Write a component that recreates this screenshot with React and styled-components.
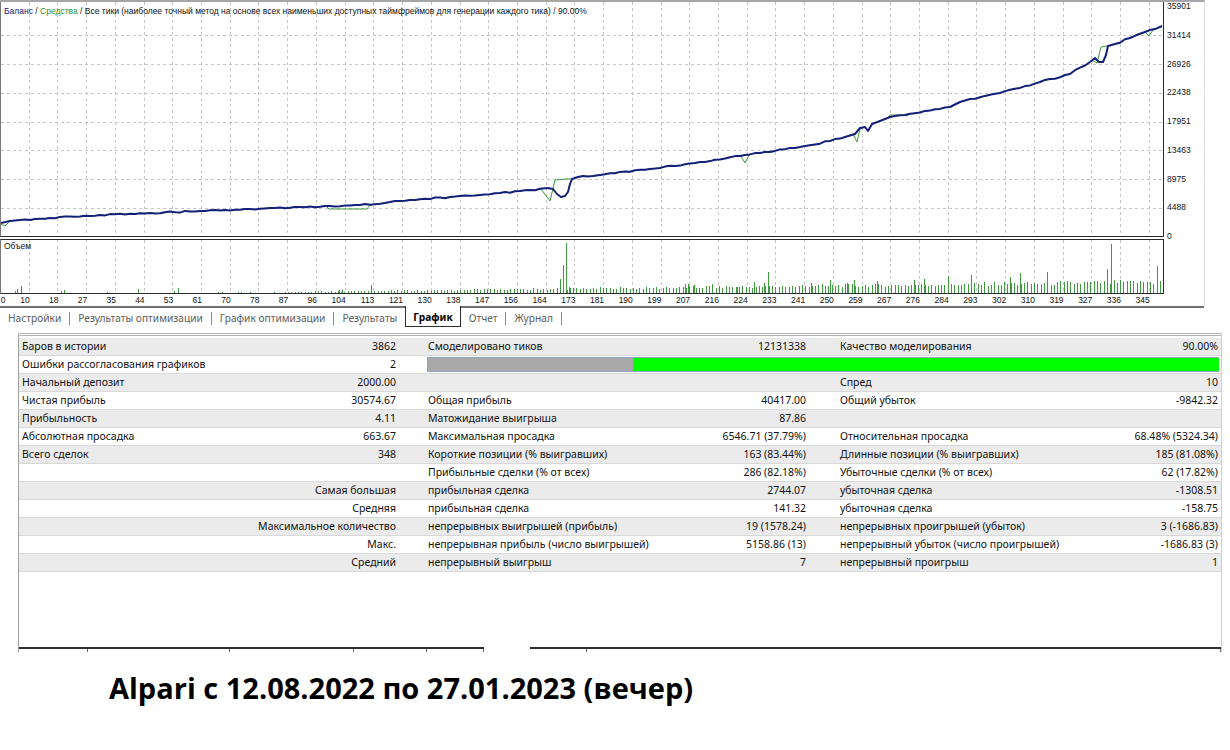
import React from 'react';
import styled, { createGlobalStyle, css } from 'styled-components';

const GlobalStyle = createGlobalStyle`
  html, body { margin: 0; padding: 0; background: #fff; }
  body { font-family: "Noto Sans", "Open Sans", sans-serif; }
`;

const Page = styled.div`
  width: 1230px;
  height: 750px;
  overflow: hidden;
  background: #fff;
`;

// ---- chart window ----
const ChartWindow = styled.div`
  width: 1204px;
  border-top: 2px solid #a6a6a6;
  border-right: 1px solid #dedede;
  font-family: "Liberation Sans", Arial, sans-serif;
  font-size: 8.5px;
  line-height: 10px;
  color: #111;
`;

const Pane = styled.div`
  display: flex;
  align-items: flex-start;
  height: ${p => p.height}px;
  ${p => p.gap && css`margin-top: ${p.gap}px;`}
`;

const Plot = styled.div`
  position: relative;
  flex: 0 0 auto;
  box-sizing: border-box;
  width: 1164px;
  height: ${p => p.height}px;
  border-left: 1px solid #7a7a7a;
  border-right: 1px solid #2a2a2a;
  border-bottom: 1px solid #2a2a2a;
  ${p => p.boxed && css`border-top: 1px solid #2a2a2a;`}
  svg { display: block; }
`;

const Legend = styled.div`
  position: absolute;
  top: ${p => p.top}px;
  left: 3px;
  white-space: nowrap;
  color: #111;
`;

const Tint = styled.span`
  color: ${p => p.color};
`;

const PriceScale = styled.div`
  display: flex;
  flex-direction: column;
  justify-content: space-between;
  height: 240px;
  margin-top: -1px;
  padding-left: 3px;
`;

const TimeScale = styled.div`
  display: flex;
  width: 1164px;
  height: 12px;
  overflow: hidden;
`;

const TimeLabel = styled.div`
  flex: 0 0 ${p => p.w}px;
  text-align: right;
  line-height: 12px;
`;

// ---- tabs ----
const TabBar = styled.div`
  display: flex;
  align-items: flex-start;
  width: 1204px;
  height: 22px;
  border-top: 2px solid #707070;
  font-family: "Noto Sans", "Open Sans", sans-serif;
  font-size: 10.2px;
`;

const Tab = styled.div`
  padding: 0 8px;
  height: 20px;
  line-height: 20px;
  color: #5c5c5c;
  white-space: nowrap;
  ${p => p.active && css`
    margin-top: -2px;
    padding: 3px 7px 0;
    line-height: 17px;
    box-sizing: border-box;
    height: 21px;
    background: #fff;
    color: #000;
    font-weight: 700;
    border: 1px solid #2e2e2e;
    border-top: none;
  `}
`;

const TabSep = styled.div`
  width: 1px;
  height: 13px;
  margin-top: 4px;
  background: #8a8a8a;
`;

// ---- report ----
const Report = styled.div`
  display: flex;
  flex-direction: column;
  box-sizing: border-box;
  width: 1204px;
  height: 319px;
  margin: 3px 0 0 18px;
  border-top: 3px double #b4b4b4;
  border-left: 1px solid #a0a0a0;
  border-right: 1px solid #d0d0d0;
  padding-top: 2px;
  font-family: "Noto Sans", "Open Sans", sans-serif;
  font-size: 10.5px;
  color: #111;
`;

const Row = styled.div`
  display: grid;
  grid-template-columns: 278px 96px 32px 272px 106px 34px 260px 118px;
  height: 17px;
  line-height: 17px;
  padding: 0 3px;
  border-bottom: 1px solid #d8d8d8;
  background: ${p => (p.shade ? '#ebebeb' : '#fff')};
`;

const Cell = styled.div`
  grid-column: ${p => p.col};
  white-space: nowrap;
  text-align: ${p => (p.right ? 'right' : 'left')};
`;

const Quality = styled.div`
  grid-column: 4 / 9;
  align-self: center;
  display: flex;
  height: 15px;
  margin: 0 -1px;
  box-sizing: border-box;
  border: 1px solid #8ea6c0;
  border-right: none;
  background: #00ff00;
`;

const QualityFill = styled.div`
  background: #a9a9a9;
`;

const Footer = styled.div`
  display: flex;
  margin-top: auto;
  gap: 46px;
`;

const FooterBar = styled.div`
  display: flex;
  border-top: 2px solid #2e2e2e;
`;

const FooterCol = styled.div`
  width: ${p => p.w}px;
  height: 3px;
  box-sizing: border-box;
  border-right: 1px solid #6a6a6a;
`;

const Caption = styled.div`
  margin: 16px 0 0 109px;
  font-family: "Open Sans", "Noto Sans", sans-serif;
  font-weight: 700;
  font-size: 29px;
  line-height: 40px;
  color: #000;
`;

// ---- data ----
const prices = ['35901', '31414', '26926', '22438', '17951', '13463', '8975', '4488', '0'];
const times = [0, 10, 18, 27, 35, 44, 53, 61, 70, 78, 87, 96, 104, 113, 121, 130, 138, 147, 156, 164, 173, 181, 190, 199, 207, 216, 224, 233, 241, 250, 259, 267, 276, 284, 293, 302, 310, 319, 327, 336, 345];

const balanceKeys = [[1, 223], [10, 221], [20, 220], [50, 218], [100, 215], [150, 213], [200, 211], [250, 209], [300, 207], [330, 206], [360, 205], [400, 201], [450, 197], [500, 193], [530, 190], [548, 188], [553, 189], [557, 194], [561, 197], [565, 196], [568, 192], [570, 184], [572, 179], [578, 177], [600, 175], [650, 169], [700, 162], [740, 156], [760, 153], [800, 147], [830, 141], [845, 137], [855, 134], [860, 128], [865, 127], [868, 131], [872, 124], [880, 121], [890, 117], [905, 115], [950, 107], [960, 102], [970, 99], [1000, 93], [1040, 82], [1070, 74], [1090, 62], [1095, 58], [1099, 62], [1103, 62], [1106, 55], [1108, 46], [1115, 44], [1130, 38], [1150, 30], [1162, 26]];

const dips = [
  [[1, 224], [5, 226], [9, 222]],
  [[326, 206], [329, 209], [367, 209], [370, 205]],
  [[541, 189], [550, 201], [555, 180], [566, 179], [572, 179]],
  [[741, 156], [745, 163], [749, 155]],
  [[853, 134], [857, 142], [860, 129]],
  [[888, 118], [890, 115], [905, 115], [907, 116]],
  [[1092, 60], [1097, 63], [1101, 47], [1107, 46]],
  [[1145, 32], [1149, 36], [1153, 30]],
];

const noise = i => {
  const s = Math.sin(i * 12.9898) * 43758.5453;
  return s - Math.floor(s);
};

// fill long segments with small steps so the line looks like a trade-by-trade curve
const roughen = pts => {
  const out = [];
  pts.forEach((p, i) => {
    out.push(p);
    const q = pts[i + 1];
    if (!q || q[0] - p[0] < 12) return;
    for (let x = p[0] + 5; x < q[0] - 3; x += 5) {
      const y = p[1] + ((q[1] - p[1]) * (x - p[0])) / (q[0] - p[0]);
      out.push([x, y + (noise(x) - 0.5) * 1.6]);
    }
  });
  return out;
};

const balance = roughen(balanceKeys);

const equity = (() => {
  const out = balance.filter(([x]) => !dips.some(d => x >= d[0][0] && x <= d[d.length - 1][0]));
  dips.forEach(d => out.push(...d));
  return out.sort((a, b) => a[0] - b[0]);
})();

const spikes = { 15: 2, 17: 4, 21: 7, 61: 2, 64: 3, 107: 1, 138: 4, 174: 2, 178: 5, 218: 1, 222: 1, 238: 1, 241: 1, 250: 1, 274: 1, 339: 3, 342: 3, 371: 8, 560: 14, 563: 28, 566: 50, 569: 6, 685: 9, 688: 9, 694: 8, 712: 9, 737: 6, 754: 11, 764: 10, 768: 21, 811: 10, 830: 13, 847: 10, 854: 13, 877: 12, 914: 13, 924: 14, 948: 17, 971: 18, 1010: 16, 1020: 20, 1047: 21, 1107: 24, 1111: 49, 1157: 27 };

const volume = (() => {
  const bars = [];
  for (let i = 0; i < 350; i++) {
    const x = Math.round(3 + i * 3.315);
    if (x > 1161) break;
    let h = 0;
    if (x >= 282) h = Math.round((1 + ((x - 282) / 860) * 10) * (0.75 + 0.45 * noise(i)));
    bars.push([x, h]);
  }
  Object.entries(spikes).forEach(([x, h]) => bars.push([Number(x), h]));
  return bars.filter(([, h]) => h > 0);
})();

const rows = [
  { cells: [['Баров в истории', '3862'], ['Смоделировано тиков', '12131338'], ['Качество моделирования', '90.00%']] },
  { cells: [['Ошибки рассогласования графиков', '2']], quality: 25.9 },
  { cells: [['Начальный депозит', '2000.00'], null, ['Спред', '10']] },
  { cells: [['Чистая прибыль', '30574.67'], ['Общая прибыль', '40417.00'], ['Общий убыток', '-9842.32']] },
  { cells: [['Прибыльность', '4.11'], ['Матожидание выигрыша', '87.86'], null] },
  { cells: [['Абсолютная просадка', '663.67'], ['Максимальная просадка', '6546.71 (37.79%)'], ['Относительная просадка', '68.48% (5324.34)']] },
  { cells: [['Всего сделок', '348'], ['Короткие позиции (% выигравших)', '163 (83.44%)'], ['Длинные позиции (% выигравших)', '185 (81.08%)']] },
  { cells: [null, ['Прибыльные сделки (% от всех)', '286 (82.18%)'], ['Убыточные сделки (% от всех)', '62 (17.82%)']] },
  { lead: 'Самая большая', cells: [null, ['прибыльная сделка', '2744.07'], ['убыточная сделка', '-1308.51']] },
  { lead: 'Средняя', cells: [null, ['прибыльная сделка', '141.32'], ['убыточная сделка', '-158.75']] },
  { lead: 'Максимальное количество', cells: [null, ['непрерывных выигрышей (прибыль)', '19 (1578.24)'], ['непрерывных проигрышей (убыток)', '3 (-1686.83)']] },
  { lead: 'Макс.', cells: [null, ['непрерывная прибыль (число выигрышей)', '5158.86 (13)'], ['непрерывный убыток (число проигрышей)', '-1686.83 (3)']] },
  { lead: 'Средний', cells: [null, ['непрерывный выигрыш', '7'], ['непрерывный проигрыш', '1']] },
];

const tabs = [
  { name: 'Настройки', sep: true },
  { name: 'Результаты оптимизации', sep: true },
  { name: 'График оптимизации', sep: true },
  { name: 'Результаты' },
  { name: 'График', active: true },
  { name: 'Отчет', sep: true },
  { name: 'Журнал', sep: true },
];

const gridX = times.slice(1).map((_, k) => Math.round(28.72 * (k + 1)));
const gridY = [35, 64, 93, 122, 150, 179, 208];

const toLocal = (pts, dy) => pts.map(([x, y]) => `${x - 1},${(y - dy).toFixed(1)}`).join(' ');

function GridLines({ height, rowsY, dy }) {
  return (
    <g stroke="#c6c6c6" strokeWidth="1" strokeDasharray="3 3" shapeRendering="crispEdges">
      {gridX.map(x => <line key={'v' + x} x1={x - 0.5} x2={x - 0.5} y1={0} y2={height} />)}
      {rowsY.map(y => <line key={'h' + y} x1={0} x2={1162} y1={y - dy + 0.5} y2={y - dy + 0.5} />)}
    </g>
  );
}

function MainChart() {
  return (
    <svg width="1162" height="234">
      <GridLines height={234} rowsY={gridY} dy={2} />
      <polyline points={toLocal(equity, 2)} fill="none" stroke="#3a9a3a" strokeWidth="1" />
      <polyline points={toLocal(balance, 2)} fill="none" stroke="#14217a" strokeWidth="2" strokeLinejoin="round" />
    </svg>
  );
}

function VolumeChart() {
  return (
    <svg width="1162" height="53">
      <GridLines height={53} rowsY={[]} dy={0} />
      <g stroke="#3f9a3f" strokeWidth="1" shapeRendering="crispEdges">
        {volume.map(([x, h], i) => (
          <line key={i} x1={x - 0.5} x2={x - 0.5} y1={53} y2={53 - h} />
        ))}
      </g>
    </svg>
  );
}

function ReportRow({ row, shade }) {
  const cols = [[1, 2], [4, 5], [7, 8]];
  return (
    <Row shade={shade}>
      {row.lead && <Cell col="1 / 3" right>{row.lead}</Cell>}
      {row.cells.map((c, g) =>
        c ? (
          <React.Fragment key={g}>
            <Cell col={cols[g][0]}>{c[0]}</Cell>
            <Cell col={cols[g][1]} right>{c[1]}</Cell>
          </React.Fragment>
        ) : null
      )}
      {row.quality && (
        <Quality>
          <QualityFill style={{ width: `${row.quality}%` }} />
        </Quality>
      )}
    </Row>
  );
}

export default function App() {
  return (
    <Page>
      <GlobalStyle />
      <ChartWindow>
        <Pane height={235}>
          <Plot height={235}>
            <MainChart />
            <Legend top={4}>
              <Tint color="#101a80">Баланс</Tint> / <Tint color="#2f8f2f">Средства</Tint> / Все тики (наиболее точный метод на основе всех наименьших доступных таймфреймов для генерации каждого тика) / 90.00%
            </Legend>
          </Plot>
          <PriceScale>
            {prices.map(p => <div key={p}>{p}</div>)}
          </PriceScale>
        </Pane>
        <Pane height={55} gap={2}>
          <Plot height={55} boxed>
            <VolumeChart />
            <Legend top={1}>Объем</Legend>
          </Plot>
        </Pane>
        <TimeScale>
          {times.map((t, k) => (
            <TimeLabel key={t} w={k === 0 ? 5.5 : k === 1 ? 24.22 : 28.72}>{t}</TimeLabel>
          ))}
        </TimeScale>
      </ChartWindow>

      <TabBar>
        {tabs.map(t => (
          <React.Fragment key={t.name}>
            <Tab active={t.active}>{t.name}</Tab>
            {t.sep && <TabSep />}
          </React.Fragment>
        ))}
      </TabBar>

      <Report>
        {rows.map((r, i) => <ReportRow key={i} row={r} shade={i % 2 === 0} />)}
        <Footer>
          <FooterBar>
            {[69, 142, 124, 73, 57].map((w, i) => <FooterCol key={i} w={w} />)}
          </FooterBar>
          <FooterBar>
            {[57, 634].map((w, i) => <FooterCol key={i} w={w} />)}
          </FooterBar>
        </Footer>
      </Report>

      <Caption>Alpari с 12.08.2022 по 27.01.2023 (вечер)</Caption>
    </Page>
  );
}
